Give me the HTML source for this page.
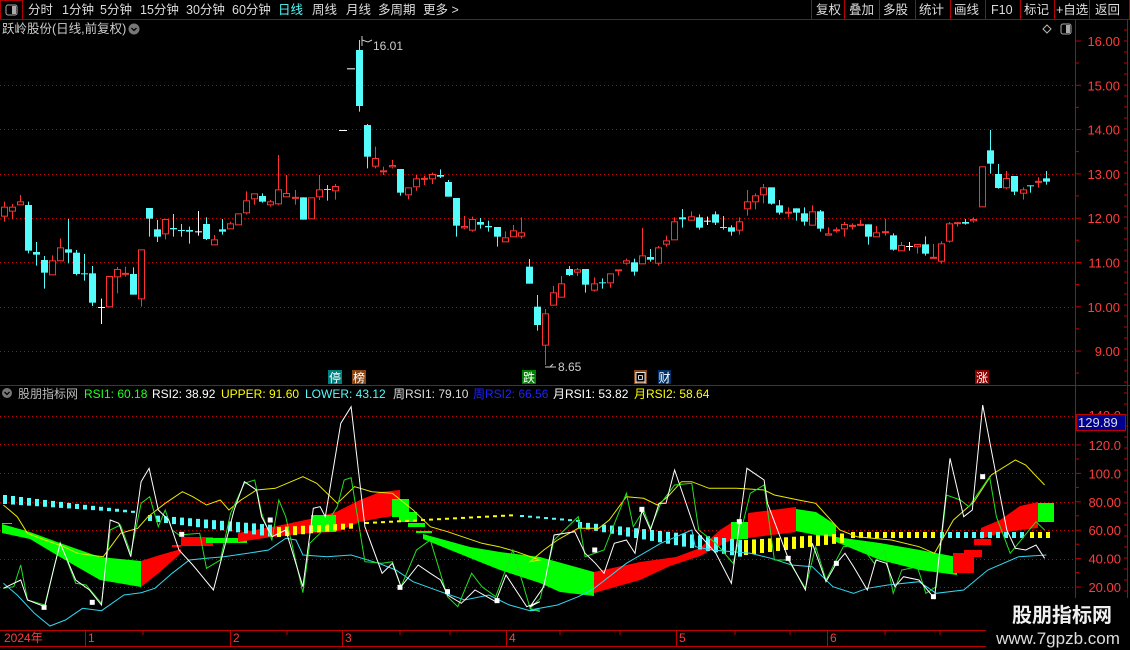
<!DOCTYPE html>
<html><head><meta charset="utf-8">
<style>
*{margin:0;padding:0}
body{width:1130px;height:650px;background:#000;overflow:hidden;font-family:"Liberation Sans","Noto Sans CJK SC",sans-serif;}
svg{position:absolute;left:0;top:0}
text{font-family:"Liberation Sans","Noto Sans CJK SC",sans-serif;}
</style></head><body>
<svg id="s" width="1130" height="650" viewBox="0 0 1130 650" xmlns="http://www.w3.org/2000/svg">
<!-- top bar -->
<line x1="0" y1="19.5" x2="1130" y2="19.5" stroke="#b00000"/>
<rect x="0.5" y="0.5" width="22" height="19" fill="none" stroke="#b00000"/>
<rect x="6" y="5" width="11" height="10" rx="2" fill="none" stroke="#aaa"/>
<rect x="12" y="6" width="4" height="8" fill="#aaa"/>
<g font-size="12.5" fill="#ddd">
<text x="28" y="14">分时</text><text x="62" y="14">1分钟</text><text x="100" y="14">5分钟</text>
<text x="140" y="14">15分钟</text><text x="186" y="14">30分钟</text><text x="232" y="14">60分钟</text>
<text x="278" y="14" fill="#54fcfc">日线</text><text x="312" y="14">周线</text><text x="346" y="14">月线</text>
<text x="378" y="14">多周期</text><text x="423" y="14">更多 &gt;</text>
<text x="816" y="14">复权</text><text x="849" y="14">叠加</text><text x="883" y="14">多股</text>
<text x="919" y="14">统计</text><text x="954" y="14">画线</text><text x="991" y="14">F10</text>
<text x="1024" y="14">标记</text><text x="1056" y="14">+自选</text><text x="1095" y="14">返回</text>
</g>
<g stroke="#b00000"><line x1="811.5" y1="0" x2="811.5" y2="19"/><line x1="844.5" y1="0" x2="844.5" y2="19"/><line x1="879.5" y1="0" x2="879.5" y2="19"/><line x1="915.5" y1="0" x2="915.5" y2="19"/><line x1="950.5" y1="0" x2="950.5" y2="19"/><line x1="985.5" y1="0" x2="985.5" y2="19"/><line x1="1020.5" y1="0" x2="1020.5" y2="19"/><line x1="1054.5" y1="0" x2="1054.5" y2="19"/><line x1="1089.5" y1="0" x2="1089.5" y2="19"/><line x1="1129.5" y1="0" x2="1129.5" y2="19"/></g>
<text x="2" y="33" font-size="12.5" fill="#ccc">跃岭股份(日线,前复权)</text>
<circle cx="134" cy="29" r="5.5" fill="#777"/><path d="M131.5 28 L134 30.5 L136.5 28" stroke="#000" fill="none" stroke-width="1.3"/>
<path d="M1047 25 L1051 29 L1047 33 L1043 29 Z" fill="none" stroke="#bbb"/>
<rect x="1061" y="24" width="10" height="10" rx="2" fill="none" stroke="#aaa"/><rect x="1066" y="25" width="4" height="8" fill="#aaa"/>
<!-- axis frame -->
<line x1="1075.5" y1="20" x2="1075.5" y2="650" stroke="#c00000"/>
<line x1="1127.5" y1="20" x2="1127.5" y2="650" stroke="#c00000"/>
<line x1="0" y1="385.5" x2="1130" y2="385.5" stroke="#c00000"/>
<line x1="0" y1="630.5" x2="1075" y2="630.5" stroke="#c00000"/>
<line x1="0" y1="646.5" x2="1075" y2="646.5" stroke="#c00000"/>
<g id="grid" stroke="#c00000" stroke-dasharray="1 3"></g>
<g id="ax" font-size="13" fill="#ff3c3c" text-anchor="end"></g>
<g id="ticks" stroke="#c00000"></g>
<g id="ind"></g>
<g id="cand"></g>
<!-- price labels -->
<g fill="#ccc" font-size="12">
<path d="M362 36 L362 46 M362 40 L368 42 L372 40" stroke="#ccc" fill="none"/>
<text x="373" y="50">16.01</text>
<path d="M556 367 L550 367 M550 367 L553 364" stroke="#ccc" fill="none"/>
<line x1="545" y1="367" x2="556" y2="367" stroke="#ccc"/>
<text x="558" y="371">8.65</text>
</g>
<!-- markers -->
<g font-size="12" fill="#fff" text-anchor="middle">
<rect x="328" y="370" width="14" height="14" fill="#008080"/><text x="335" y="382">停</text>
<rect x="352" y="370" width="14" height="14" fill="#8b4513"/><text x="359" y="382">榜</text>
<rect x="522" y="370" width="14" height="14" fill="#008000"/><text x="529" y="382">跌</text>
<rect x="634" y="370" width="13" height="14" fill="#8b4513"/><rect x="636" y="372" width="9" height="10" fill="#000"/><text x="640.5" y="382">回</text>
<rect x="658" y="370" width="13" height="14" fill="#00306a"/><text x="664.5" y="382">财</text>
<rect x="975" y="370" width="14" height="14" fill="#8b0000"/><text x="982" y="382">涨</text>
</g>
<!-- indicator title -->
<circle cx="7" cy="393" r="5" fill="#777"/><path d="M4.5 392 L7 394.5 L9.5 392" stroke="#000" fill="none" stroke-width="1.3"/>
<g font-size="12">
<text x="18" y="398" fill="#bbb">股朋指标网</text>
<text x="84" y="398" fill="#22ff22">RSI1: 60.18</text>
<text x="152" y="398" fill="#fff">RSI2: 38.92</text>
<text x="221" y="398" fill="#ffff00">UPPER: 91.60</text>
<text x="305" y="398" fill="#54fcfc">LOWER: 43.12</text>
<text x="393" y="398" fill="#ddd">周RSI1: 79.10</text>
<text x="473" y="398" fill="#2020ff">周RSI2: 66.56</text>
<text x="553" y="398" fill="#fff">月RSI1: 53.82</text>
<text x="634" y="398" fill="#ffff00">月RSI2: 58.64</text>
</g>
<!-- 129.89 box -->
<text x="1121" y="420" font-size="13" fill="#ff3c3c" text-anchor="end">140.0</text>
<rect x="1076.5" y="414.5" width="49" height="16" fill="#000090" stroke="#c00000"/>
<text x="1078" y="427" font-size="13" fill="#ddd">129.89</text>
<!-- dates -->
<g font-size="12" fill="#ff3c3c">
<text x="4" y="642">2024年</text><text x="88" y="642">1</text><text x="233" y="642">2</text><text x="345" y="642">3</text><text x="509" y="642">4</text><text x="679" y="642">5</text><text x="830" y="642">6</text>
</g>
<g stroke="#c00000"><line x1="85.5" y1="631" x2="85.5" y2="646"/><line x1="230.5" y1="631" x2="230.5" y2="646"/><line x1="342.5" y1="631" x2="342.5" y2="646"/><line x1="506.5" y1="631" x2="506.5" y2="646"/><line x1="676.5" y1="631" x2="676.5" y2="646"/><line x1="827.5" y1="631" x2="827.5" y2="646"/>
<line x1="40" y1="631" x2="40" y2="635"/><line x1="143" y1="631" x2="143" y2="635"/><line x1="287" y1="631" x2="287" y2="635"/><line x1="400" y1="631" x2="400" y2="635"/><line x1="450" y1="631" x2="450" y2="635"/><line x1="560" y1="631" x2="560" y2="635"/><line x1="620" y1="631" x2="620" y2="635"/><line x1="735" y1="631" x2="735" y2="635"/><line x1="790" y1="631" x2="790" y2="635"/><line x1="885" y1="631" x2="885" y2="635"/><line x1="940" y1="631" x2="940" y2="635"/><line x1="1000" y1="631" x2="1000" y2="635"/></g>
<!-- watermark -->
<rect x="986" y="598" width="144" height="52" fill="#000"/>
<text x="1062" y="622" font-size="20" font-weight="bold" fill="#f0f0f0" text-anchor="middle">股朋指标网</text>
<text x="1058" y="644" font-size="17" fill="#ddd" text-anchor="middle">www.7gpzb.com</text>
</svg>
<script>
var NS="http://www.w3.org/2000/svg";
function el(p,t,a){var e=document.createElementNS(NS,t);for(var k in a)e.setAttribute(k,a[k]);p.appendChild(e);return e;}
var S=document.getElementById('s');
var grid=document.getElementById('grid'),ax=document.getElementById('ax'),tk=document.getElementById('ticks');
[85,129,174,218,262,307,351].forEach(function(y){el(grid,'line',{x1:0,y1:y+.5,x2:1075,y2:y+.5});});
[416,444,473,502,530,559,587].forEach(function(y){el(grid,'line',{x1:0,y1:y+.5,x2:1075,y2:y+.5});});
var pl=["16.00","15.00","14.00","13.00","12.00","11.00","10.00","9.00"];
pl.forEach(function(t,i){var y=41+i*44.3;var tx=el(ax,'text',{x:1120,y:y+5});tx.textContent=t;
el(tk,'line',{x1:1075,y1:y,x2:1081,y2:y});el(tk,'line',{x1:1075,y1:y+22,x2:1079,y2:y+22});});
var il=["120.0","100.0","80.00","60.00","40.00","20.00"];
il.forEach(function(t,i){var y=445+i*28.4;var tx=el(ax,'text',{x:1121,y:y+5});tx.textContent=t;
el(tk,'line',{x1:1075,y1:y,x2:1081,y2:y});el(tk,'line',{x1:1075,y1:y+14,x2:1079,y2:y+14});});
for(var y=30;y<640;y+=11){el(tk,'line',{x1:1127,y1:y,x2:1124,y2:y});}
// candles
var C=document.getElementById('cand');
var RED="#ff3232",CY="#54fcfc";
function cd(cx,t,bt,bb,wt,wb){
 cx=Math.round(cx);var x=cx+.5;
 if(t=='d'){el(C,'line',{x1:cx-4,y1:bt+.5,x2:cx+4,y2:bt+.5,stroke:'#fff'});return;}
 if(t=='w'){el(C,'line',{x1:x,y1:wt,x2:x,y2:wb,stroke:'#fff'});el(C,'line',{x1:cx-3,y1:bt+.5,x2:cx+4,y2:bt+.5,stroke:'#fff'});return;}
 if(t=='c'){el(C,'line',{x1:x,y1:wt,x2:x,y2:wb,stroke:CY});el(C,'rect',{x:cx-3,y:bt,width:7,height:Math.max(bb-bt,1),fill:CY});return;}
 el(C,'line',{x1:x,y1:wt,x2:x,y2:bt,stroke:RED});el(C,'line',{x1:x,y1:bb,x2:x,y2:wb,stroke:RED});
 if(bb-bt<2){el(C,'line',{x1:cx-3,y1:bt+.5,x2:cx+4,y2:bt+.5,stroke:RED,'stroke-width':2});}
 else el(C,'rect',{x:cx-2.5,y:bt+.5,width:6,height:bb-bt-1,fill:'#000',stroke:RED});
}
var A=[[13,'r',530,560,515,575],[36,'r',530,545,522,568],[59,'r',514,526,495,526],[82,'c',525,662,515,670],[105,'c',666,674,636,707],[128,'c',690,728,678,776],[152,'r',691,736,676,736],[175,'r',652,694,625,694],[198,'c',658,668,567,700],[221,'c',668,732,660,736],[244,'c',730,732,672,752],[268,'c',730,818,708,828],[292,'w',831,831,806,882],[317,'r',738,832,738,832],[340,'r',717,742,711,790],[364,'r',730,735,710,740],[387,'c',732,794,712,794],[410,'r',658,808,658,830],[433,'c',534,566,534,620],[456,'c',598,620,570,636],[480,'r',567,613,567,628],[503,'c',594,598,552,620],[527,'c',600,602,582,620],[550,'c',600,605,590,641],[575,'w',604,604,543,617],[598,'c',582,627,562,630],[622,'r',628,646,615,646],[646,'c',598,605,567,614],[669,'r',580,598,575,598],[692,'r',550,586,550,586],[715,'r',511,550,484,553],[738,'r',490,508,490,524],[761,'c',498,515,490,518],[785,'r',514,526,510,530],[808,'r',478,523,375,526],[831,'r',489,502,435,502],[857,'r',502,506,480,524],[880,'c',502,569,502,569],[904,'r',502,568,502,568],[927,'r',478,502,435,510],[950,'c',477,479,465,512],[973,'r',468,484,462,509],[996,'d',300],[1019,'d',115],[1043,'c',60,228,30,245],[1067,'c',285,380,282,415],[1090,'r',384,410,350,415],[1113,'r',421,427,410,435],[1139,'r',405,412,390,415],[1163,'c',417,488,417,497],[1186,'r',472,496,472,508],[1209,'r',445,472,435,482],[1232,'r',445,449,438,465],[1256,'r',432,448,428,462],[1279,'c',435,440,418,444],[1302,'c',456,500,450,500],[1325,'c',504,587,504,620],[1349,'r',588,595,558,598],[1372,'r',567,602,560,605],[1395,'c',576,584,564,596],[1418,'c',588,592,572,605],[1444,'c',591,620,591,650],[1467,'r',622,637,604,637],[1490,'r',601,622,585,622],[1514,'r',607,620,562,626]];
A.forEach(function(a){cd(a[0]/2.905,a[1],30+a[2]/3,30+(a[3]||a[2])/3,30+(a[4]||a[2])/3,30+(a[5]||a[2])/3);});
var B=[[27,'c',500,551,477,551],[50,'c',620,675,585,692],[73,'r',640,737,627,795],[96,'r',577,617,558,617],[119,'r',550,593,528,593],[142,'c',507,525,498,528],[165,'r',508,518,504,528],[188,'c',507,554,507,578],[213,'r',550,572,532,575],[236,'c',547,549,535,566],[259,'r',520,550,520,563],[283,'r',508,514,508,527],[306,'r',481,491,476,494],[329,'c',487,515,476,527],[352,'r',466,493,384,493],[375,'c',471,479,447,485],[398,'r',442,491,438,497],[421,'r',421,434,407,440],[444,'r',364,421,352,421],[467,'c',352,358,327,383],[493,'r',349,362,334,362],[516,'c',352,383,343,389],[538,'w',362,362,350,375],[562,'c',343,368,334,375],[585,'c',381,384,348,389],[608,'c',382,395,376,407],[631,'r',364,392,352,404],[654,'r',304,328,270,347],[677,'r',286,307,280,328],[700,'r',262,286,252,310],[723,'c',262,311,262,314],[746,'c',316,338,300,344],[772,'r',335,341,322,352],[795,'c',325,338,325,362],[818,'c',340,365,322,377],[841,'r',334,377,316,377],[864,'c',334,386,330,395],[887,'r',400,407,382,407],[910,'r',388,394,382,398],[933,'r',372,388,366,410],[956,'r',376,378,370,389],[979,'r',373,375,360,378],[1002,'c',373,410,373,434],[1025,'r',397,412,378,412],[1050,'r',395,396,356,407],[1074,'c',406,449,400,452],[1097,'r',435,454,426,454],[1120,'w',438,438,426,452],[1143,'r',432,442,432,461],[1166,'c',433,461,409,467],[1189,'r',472,473,432,475],[1212,'r',430,485,424,491],[1235,'r',370,425,366,428],[1258,'r',368,370,366,380],[1281,'c',366,371,357,374],[1304,'r',357,364,352,368],[1330,'r',199,322,199,322],[1353,'c',151,191,90,221],[1376,'c',222,264,192,266],[1399,'r',234,265,213,268],[1422,'c',228,275,228,285],[1446,'r',268,281,262,299],[1467,'c',256,258,256,278],[1491,'r',244,246,232,263],[1514,'c',235,245,213,254]];
B.forEach(function(a){cd(520+a[0]/2.877,a[1],100+a[2]/3,100+a[3]/3,100+a[4]/3,100+a[5]/3);});
// indicator
var I=document.getElementById('ind');
function poly(pts,c){el(I,'polygon',{points:pts,fill:c});}
var G="#00ff00",R="#ff0000";
poly("2,524 30,532 60,543 100,557 141,561 141,587 100,580 60,557 30,539 2,533",G);
poly("141,561 160,555 181,549 181,553 160,572 141,587",R);
poly("172,545 181,545 181,547 172,547",R);
poly("181,537 213,537 213,546 181,546",R);
poly("206,538 247,538 247,543 206,543",G);
poly("238,533 272,527 310,519 336,512 360,500 380,492 400,490 400,515 380,518 360,522 336,532 310,533 272,537 238,542",R);
poly("311,515 336,515 336,532 311,532",G);
poly("392,499 409,499 409,517 392,517",G);poly("399,512 417,512 417,522 399,522",G);poly("408,523 425,523 425,527 408,527",G);poly("416,531 432,531 432,533 416,533",G);
poly("423,534 470,547 500,552 540,557 594,572 594,596 560,592 540,583 500,570 470,558 423,539",G);
poly("594,572 640,562 676,557 700,548 720,530 731,523 731,540 700,556 670,566 640,580 594,593",R);
poly("731,522 748,522 748,539 731,539",G);
poly("748,513 796,507 796,532 748,538",R);
poly("796,509 816,512 836,525 836,537 816,535 796,531",G);
poly("836,537 880,543 920,550 957,557 957,575 920,570 880,560 836,542",G);
poly("953,553 974,553 974,573 953,573",R);poly("964,550 982,550 982,557 964,557",R);poly("974,539 991,539 991,545 974,545",R);
poly("981,528 1000,520 1020,506 1038,502 1038,528 1020,530 1000,533 981,539",R);
poly("1038,503 1054,503 1054,522 1038,522",G);
el(I,'line',{x1:2,y1:523.5,x2:12,y2:523.5,stroke:G});
// bars
function bars(x0,x1,t0,t1,b0,b1,c,w){for(var x=x0;x<=x1;x+=8){var f=(x-x0)/Math.max(x1-x0,1);var t=t0+(t1-t0)*f,b=b0+(b1-b0)*f;el(I,'rect',{x:x,y:t,width:w||4,height:Math.max(b-t,2),fill:c});}}
bars(3,133,495,511,504,513,CY);
bars(148,272,515,525,521,537,CY);
bars(277,355,527,523,537,528,"#ffff00");
bars(365,516,522,514,524,516,"#ffff00");
bars(520,578,515,520,517,522,CY);
bars(578,740,522,540,528,557,CY);
bars(744,847,540,533,555,542,"#ffff00");
bars(851,936,532,532,538,538,"#ffff00");
bars(940,1026,532,532,538,538,CY);
bars(1030,1046,532,532,538,538,"#ffff00");
function line(a,b,c,off){var p=[];a.forEach(function(q){p.push((q[0]/2.905).toFixed(1)+","+(400+q[1]/3).toFixed(1));});b.forEach(function(q){p.push((530+q[0]/2.905).toFixed(1)+","+(400+q[1]/3).toFixed(1));});el(I,'polyline',{points:p.join(' '),fill:'none',stroke:c,'stroke-width':1});}
line([[10,550],[50,585],[100,640],[145,678],[190,660],[240,625],[295,632],[360,585],[410,578],[450,565],[500,520],[550,480],[600,475],[650,470],[720,460],[780,450],[830,415],[860,420],[880,465],[950,470],[1020,465],[1100,490],[1150,510],[1200,545],[1280,575],[1350,600],[1420,585],[1480,615],[1540,632],[1568,630]],
[[0,630],[80,615],[140,590],[180,570],[280,490],[380,430],[470,390],[480,440],[530,450],[640,460],[700,475],[760,495],[820,500],[880,560],[940,580],[980,565],[1040,555],[1130,545],[1180,580],[1260,570],[1330,510],[1420,470],[1500,465]],"#30d8f0");
line([[10,315],[50,350],[80,400],[130,420],[185,440],[225,460],[260,465],[300,470],[350,400],[400,385],[430,350],[480,310],[530,275],[560,290],[600,315],[640,300],[665,330],[700,300],[745,270],[800,265],[880,230],[920,250],[960,290],[980,310],[1030,260],[1080,275],[1140,280],[1200,330],[1250,380],[1300,395],[1400,430],[1450,440],[1500,455],[1568,480]],
[[0,485],[40,450],[80,420],[140,385],[200,385],[230,360],[280,290],[330,295],[370,315],[400,290],[440,245],[470,245],[520,265],[600,265],[680,270],[710,285],[780,300],[830,310],[900,390],[950,410],[1050,420],[1130,440],[1175,460],[1230,360],[1290,305],[1340,225],[1410,180],[1440,195],[1495,255]],"#e8e800");
line([[10,565],[40,560],[60,495],[80,600],[130,615],[155,510],[175,428],[220,550],[250,555],[295,610],[320,390],[350,375],[380,460],[410,310],[435,290],[460,380],[480,330],[500,390],[520,405],[580,400],[600,505],[640,480],[670,340],[710,250],[740,240],[760,340],[790,420],[810,300],[830,350],[880,578],[900,430],[930,400],[980,320],[1000,240],[1020,233],[1060,485],[1110,490],[1140,485],[1165,560],[1210,450],[1250,420],[1300,590],[1330,620],[1370,520],[1400,560],[1440,590],[1490,450],[1540,625],[1568,635]],
[[0,625],[30,595],[70,420],[140,350],[160,470],[215,450],[280,280],[300,380],[330,330],[350,385],[380,310],[420,255],[470,250],[490,390],[540,430],[590,490],[640,280],[680,255],[710,480],[750,480],[800,565],[830,440],[860,540],[910,440],[960,435],[1000,490],[1030,450],[1055,580],[1080,510],[1125,500],[1150,580],[1180,560],[1210,285],[1250,300],[1275,320],[1335,230],[1355,350],[1395,460],[1470,365],[1495,390]],"#20e020");
line([[10,565],[60,540],[80,600],[130,620],[155,510],[175,430],[220,540],[260,570],[295,615],[320,360],[345,370],[380,470],[410,245],[433,205],[460,330],[490,360],[520,450],[560,495],[580,520],[620,570],[680,330],[710,245],[745,270],[760,350],[790,410],[830,390],[880,560],[910,325],[930,320],[945,350],[990,70],[1020,20],[1060,380],[1110,520],[1140,490],[1165,560],[1215,495],[1250,520],[1280,540],[1300,585],[1340,610],[1380,570],[1440,605],[1470,525],[1530,620],[1568,605]],
[[0,620],[40,560],[70,405],[130,395],[160,460],[190,490],[215,520],[245,430],[280,420],[305,460],[325,330],[350,390],[375,310],[395,310],[420,210],[445,285],[480,390],[540,460],[585,550],[630,205],[680,240],[690,310],[750,475],[800,570],[820,430],[860,545],[890,490],[915,460],[940,500],[980,570],[1005,480],[1035,490],[1060,560],[1085,530],[1130,540],[1175,595],[1220,175],[1260,350],[1285,330],[1315,15],[1355,230],[1385,390],[1410,445],[1440,450],[1470,435],[1495,475]],"#ffffff");
[[128,622],[268,607],[528,403],[785,360],[1162,562],[1300,575],[1444,602]].forEach(function(q){el(I,'rect',{x:q[0]/2.905-2.5,y:400+q[1]/3-2.5,width:5,height:5,fill:'#fff'});});
[[188,450],[325,328],[608,365],[750,475],[890,490],[1172,590],[1315,230]].forEach(function(q){el(I,'rect',{x:530+q[0]/2.905-2.5,y:400+q[1]/3-2.5,width:5,height:5,fill:'#fff'});});
</script>
</body></html>
